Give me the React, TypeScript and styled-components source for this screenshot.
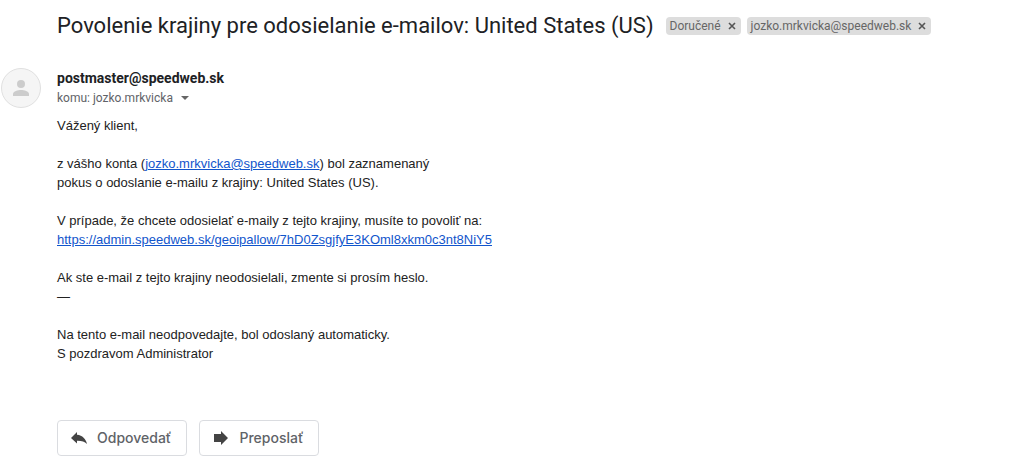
import React from "react";
import styled, { createGlobalStyle } from "styled-components";

const GlobalStyle = createGlobalStyle`
  * { box-sizing: border-box; }
  body {
    margin: 0;
    background: #fff;
    color: #222;
    font-family: Roboto, "Liberation Sans", sans-serif;
  }
`;

const Page = styled.main`
  padding: 10px 16px 16px 1px;
`;

const SubjectRow = styled.header`
  display: flex;
  flex-wrap: wrap;
  align-items: center;
  gap: 6px;
  padding-left: 56px;
`;

const Subject = styled.h1`
  margin: 0 6px 0 0;
  font-size: 22px;
  line-height: 32px;
  font-weight: 400;
  color: #202124;
`;

const Label = styled.span`
  display: flex;
  align-items: center;
  height: 18px;
  padding: 0 4px;
  gap: 6px;
  border-radius: 4px;
  background: #ddd;
  color: #666;
  font-size: 12px;
  line-height: 18px;
`;

const RemoveButton = styled.button`
  display: flex;
  align-items: center;
  justify-content: center;
  width: 10px;
  height: 18px;
  padding: 0;
  border: 0;
  background: none;
  color: #555;
  cursor: pointer;
`;

const Message = styled.article`
  display: grid;
  grid-template-columns: 40px minmax(0, 1fr);
  column-gap: 16px;
  margin-top: 26px;
`;

const Avatar = styled.div`
  display: flex;
  align-items: center;
  justify-content: center;
  width: 40px;
  height: 40px;
  border: 1px solid #e0e0e0;
  border-radius: 50%;
  background: #f5f5f5;
`;

const Sender = styled.h2`
  margin: 0;
  font-size: 14px;
  line-height: 20px;
  font-weight: 700;
  color: #202124;
`;

const RecipientButton = styled.button`
  display: flex;
  align-items: center;
  gap: 8px;
  height: 20px;
  padding: 0;
  border: 0;
  background: none;
  color: #5f6368;
  font-family: inherit;
  font-size: 12px;
  line-height: 20px;
  cursor: pointer;
`;

const Body = styled.div`
  margin-top: 8px;
  font-family: "Liberation Sans", Arial, sans-serif;
  font-size: 13px;
  line-height: 19px;
`;

const Paragraph = styled.p`
  margin: 0 0 19px;
`;

const Closing = styled.div`
  margin-bottom: 19px;
`;

const MailLink = styled.a`
  color: #1155cc;
  overflow-wrap: anywhere;
`;

const Actions = styled.div`
  display: flex;
  flex-wrap: wrap;
  gap: 12px;
  margin-top: 57px;
`;

const ActionButton = styled.button`
  display: flex;
  align-items: center;
  gap: 10px;
  height: 36px;
  padding: 0 15px 0 13px;
  border: 1px solid #dadce0;
  border-radius: 4px;
  background: #fff;
  color: #5f6368;
  font-family: Inter, sans-serif;
  font-size: 14px;
  line-height: 20px;
  font-weight: 500;
  cursor: pointer;
`;

function CrossIcon() {
  return (
    <svg width="8" height="8" viewBox="0 0 8 8" aria-hidden="true">
      <path d="M1 1l6 6M7 1L1 7" stroke="currentColor" strokeWidth="1.600" />
    </svg>
  );
}

function MailLabel({ name }: { name: string }) {
  return (
    <Label>
      {name}
      <RemoveButton type="button" aria-label={`Odstrániť ${name}`}>
        <CrossIcon />
      </RemoveButton>
    </Label>
  );
}

export default function App() {
  return (
    <>
      <GlobalStyle />
      <Page>
        <SubjectRow>
          <Subject>Povolenie krajiny pre odosielanie e-mailov: United States (US)</Subject>
          <MailLabel name="Doručené" />
          <MailLabel name="jozko.mrkvicka@speedweb.sk" />
        </SubjectRow>
        <Message>
          <Avatar>
            <svg width="16" height="18" viewBox="0 0 16 18" fill="#ccc" aria-hidden="true">
              <circle cx="8" cy="5" r="4" />
              <path d="M0 17v-2c0-2.700 5-4 8-4s8 1.300 8 4v2z" />
            </svg>
          </Avatar>
          <div>
            <Sender>postmaster@speedweb.sk</Sender>
            <RecipientButton type="button">
              komu: jozko.mrkvicka
              <svg width="8" height="4" viewBox="0 0 8 4" aria-hidden="true">
                <path d="M0 0h8L4 4z" fill="#666" />
              </svg>
            </RecipientButton>
            <Body>
              <Paragraph>Vážený klient,</Paragraph>
              <Paragraph>
                z vášho konta (
                <MailLink href="mailto:jozko.mrkvicka@speedweb.sk">jozko.mrkvicka@speedweb.sk</MailLink>) bol zaznamenaný
                <br />
                pokus o odoslanie e-mailu z krajiny: United States (US).
              </Paragraph>
              <Paragraph>
                V prípade, že chcete odosielať e-maily z tejto krajiny, musíte to povoliť na:
                <br />
                <MailLink href="https://admin.speedweb.sk/geoipallow/7hD0ZsgjfyE3KOml8xkm0c3nt8NiY5">
                  https://admin.speedweb.sk/geoipallow/7hD0ZsgjfyE3KOml8xkm0c3nt8NiY5
                </MailLink>
              </Paragraph>
              <Closing>
                Ak ste e-mail z tejto krajiny neodosielali, zmente si prosím heslo.
                <br />—
              </Closing>
              <div>
                Na tento e-mail neodpovedajte, bol odoslaný automaticky.
                <br />S pozdravom Administrator
              </div>
            </Body>
            <Actions>
              <ActionButton type="button">
                <svg width="16" height="14" viewBox="0 0 16 14" fill="#444" aria-hidden="true">
                  <path d="M6 1v2.800c5.500.6 8.800 4 10 9.200C13.500 10.300 10.500 9.600 6 9.700v2.800L0 6.900z" />
                </svg>
                Odpovedať
              </ActionButton>
              <ActionButton type="button">
                <svg width="16" height="14" viewBox="0 0 16 14" fill="#444" aria-hidden="true">
                  <path d="M1 3h7V0l7 7-7 7v-3H1z" />
                </svg>
                Preposlať
              </ActionButton>
            </Actions>
          </div>
        </Message>
      </Page>
    </>
  );
}
